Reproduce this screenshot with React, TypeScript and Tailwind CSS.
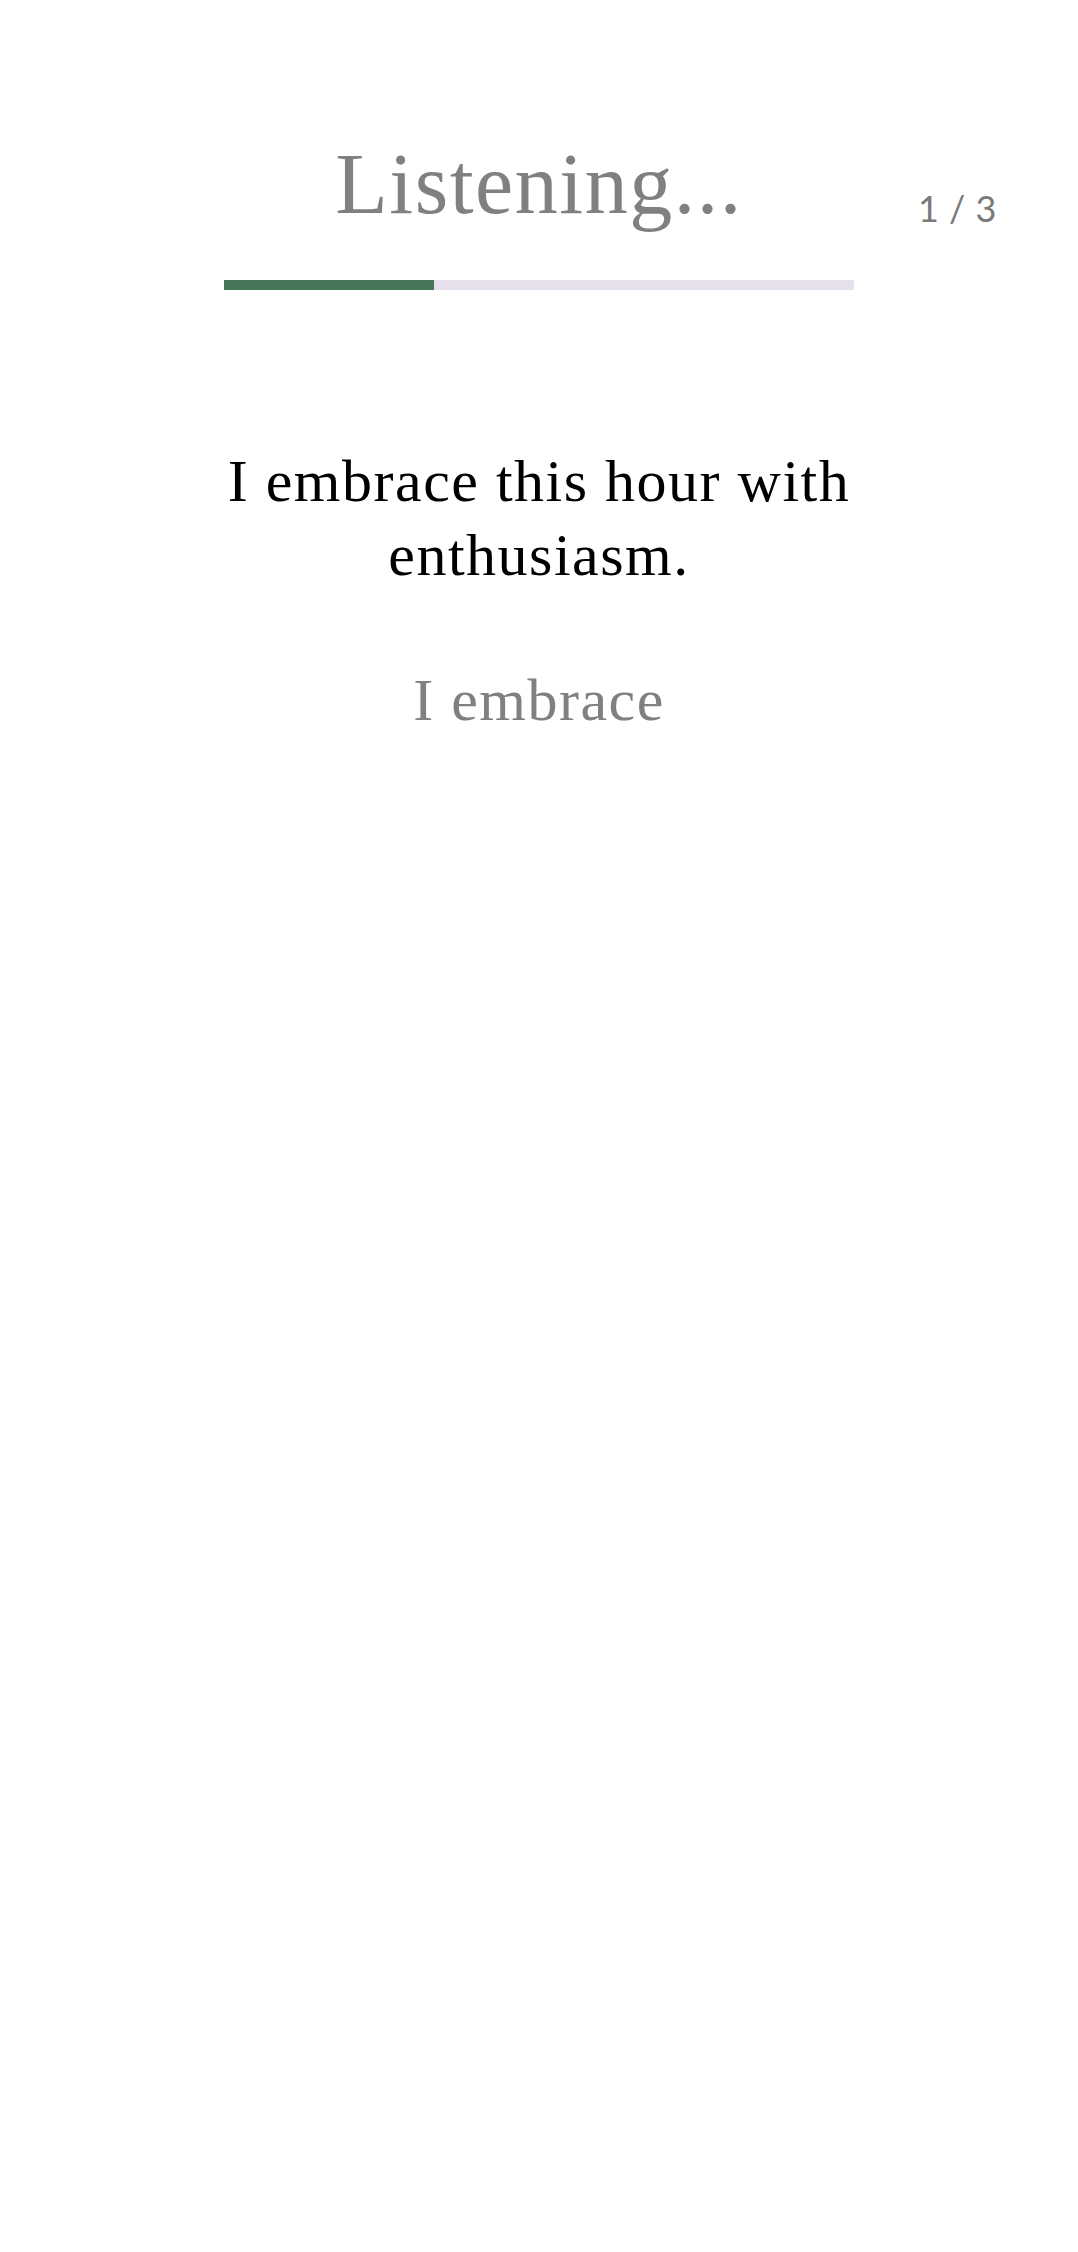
export default function App() {
  const step = 1;
  const total = 3;
  const target = 'I embrace this hour with enthusiasm.';
  const heard = 'I embrace';

  return (
    <div className="min-h-screen w-full bg-white flex flex-col items-center font-['Liberation_Serif',serif]">
      {/* Header */}
      <div className="w-full grid grid-cols-[1fr_auto_1fr] items-start pt-[141px]">
        <div />
        <h1 className="text-[86px] leading-none tracking-[1.5px] text-[#808080] text-center">
          Listening...
        </h1>
        <div className="flex justify-end pr-[81px] pt-[49px]">
          <span className="text-[36px] leading-none tracking-[0.5px] text-[#7a7a7a] font-['Lato','Open_Sans',sans-serif]">
            {step} / {total}
          </span>
        </div>
      </div>

      {/* Progress */}
      <div className="mt-[53px] w-[630px] h-[10px] flex bg-[#e6e0ec]">
        <div className="h-full bg-[#447657]" style={{ width: `${(step / total) * 100}%` }} />
      </div>

      {/* Phrase */}
      <p className="mt-[154px] w-[660px] text-center text-[60px] leading-[74px] tracking-[1.5px] text-black">
        {target}
      </p>

      {/* Transcript */}
      <p className="mt-[71px] w-[660px] text-center text-[60px] leading-[74px] tracking-[1.5px] text-[#808080]">
        {heard}
      </p>
    </div>
  );
}
